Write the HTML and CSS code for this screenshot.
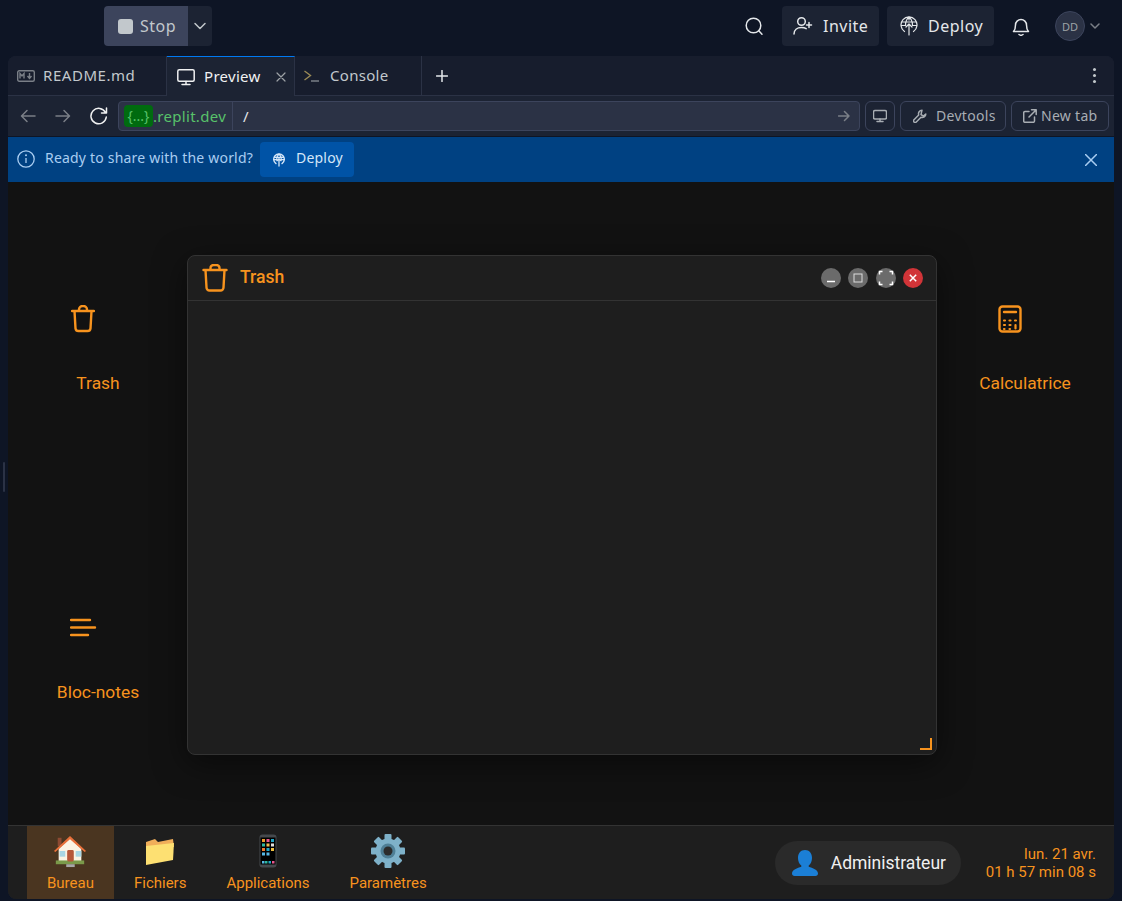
FILE: index.html
```html
<!DOCTYPE html>
<html lang="en">
<head>
<meta charset="utf-8">
<title>Preview</title>
<link rel="stylesheet" href="styles.css">
</head>
<body>
<header class="topbar">
  <div class="run">
    <button class="stop"><span class="stop-square"></span>Stop</button>
    <button class="stop-more"><svg width="14" height="14" viewBox="0 0 14 14" class="line"><path d="M2 4.500l5 5 5-5"/></svg></button>
  </div>
  <div class="top-right">
    <svg class="search line" width="20" height="20" viewBox="0 0 20 20"><circle cx="9.500" cy="9.500" r="7.300"/><path d="M14.800 14.800l3.200 3.400"/></svg>
    <button class="top-btn invite"><svg width="22" height="20" viewBox="0 0 22 20" class="line"><circle cx="8.500" cy="5.500" r="3.800"/><path d="M1 18c0-4 3-6.500 7.500-6.500 2 0 3.500.4 4.700 1.200M16 6.500v5M13.500 9h5"/></svg>Invite</button>
    <button class="top-btn deploy"><svg width="18" height="20" viewBox="0 0 18 20" class="line thin"><path d="M4.500 15.500A8 8 0 1 1 13.500 15.500M1.400 6h15.200M1 9.500h4.500M12.500 9.500H17M9 1C6.500 3 5.500 6 5.500 9.500M9 1c2.500 2 3.500 5 3.500 8.500M9 1v3M9 19V8M6 11l3-3 3 3"/></svg>Deploy</button>
    <svg class="bell line" width="18" height="20" viewBox="0 0 18 20"><path d="M1.500 15.500h15c-1.500-1.500-2-3-2-6.500a5.500 5.500 0 0 0-11 0c0 3.500-.5 5-2 6.500zM7 18.500c1 .8 3 .8 4 0"/></svg>
    <span class="avatar">DD</span>
    <svg class="avatar-more line" width="10" height="10" viewBox="0 0 10 10"><path d="M1 3l4 4 4-4"/></svg>
  </div>
</header>

<main class="panel">
  <nav class="tabs">
    <div class="tab readme">
      <svg width="18" height="12" viewBox="0 0 18 12" class="md"><rect x=".7" y=".7" width="16.600" height="10.600" rx="1.500"/><path d="M3 8.500v-5l2 2.500 2-2.500v5M12.500 3v5M10.500 6l2 2.500 2-2.500"/></svg>
      <span>README.md</span>
    </div>
    <div class="tab preview">
      <svg width="18" height="18" viewBox="0 0 18 18" class="line"><rect x=".8" y="1.800" width="16.400" height="11.400" rx="1.500"/><path d="M9 13.500V16M5 16.500h8"/></svg>
      <span>Preview</span>
      <svg class="tab-close line thin" width="10" height="10" viewBox="0 0 10 10"><path d="M1 1l8 8M9 1l-8 8"/></svg>
    </div>
    <div class="tab console">
      <svg width="15" height="12" viewBox="0 0 15 12" class="prompt"><path class="chev" d="M.5 1l6 4.500-6 4.500"/><path class="under" d="M7 11h8"/></svg>
      <span>Console</span>
    </div>
    <button class="tab-add"><svg width="12" height="12" viewBox="0 0 12 12" class="line"><path d="M6 .5v11M.5 6h11"/></svg></button>
    <span class="kebab"><i></i><i></i><i></i></span>
  </nav>

  <div class="urlbar">
    <svg class="nav-icon dim line" width="16" height="14" viewBox="0 0 16 14"><path d="M15 7H2M7 1.500L1.500 7 7 12.500"/></svg>
    <svg class="nav-icon dim line" width="16" height="14" viewBox="0 0 16 14"><path d="M1 7h13M9 1.500L14.500 7 9 12.500"/></svg>
    <svg class="nav-icon reload line" width="20" height="18" viewBox="0 0 20 18"><path d="M16.500 5.500A7.700 7.700 0 1 0 17.300 10M17.500 1v5h-5"/></svg>
    <div class="address">
      <span class="host"><b>{...}</b>.replit.dev</span>
      <span class="path">/</span>
      <svg class="go line" width="12" height="12" viewBox="0 0 12 12"><path d="M.5 6h10.500M6.500 1.500L11 6l-4.500 4.500"/></svg>
    </div>
    <button class="tool icon-only"><svg width="14" height="14" viewBox="0 0 14 14" class="line"><rect x=".5" y="1.500" width="13" height="8.500" rx="1.500"/><path d="M7 10v2.500M4 12.500h6"/></svg></button>
    <button class="tool devtools"><svg width="14" height="14" viewBox="0 0 14 14" class="line"><path d="M9 1.200a3.600 3.600 0 0 0-3.300 4.800L1 10.700a1.600 1.600 0 0 0 2.300 2.300L8 8.300A3.600 3.600 0 0 0 12.800 5L10.400 7 8 5.600l1-4.400z"/></svg><span>Devtools</span></button>
    <button class="tool newtab"><svg width="14" height="14" viewBox="0 0 14 14" class="line"><path d="M6 2.500H2a1.300 1.300 0 0 0-1.300 1.300V12A1.300 1.300 0 0 0 2 13.300h8.200a1.300 1.300 0 0 0 1.300-1.300V8M8.500.8h4.700v4.700M13 1L6 8"/></svg><span>New tab</span></button>
  </div>

  <div class="banner">
    <svg class="info" width="18" height="18" viewBox="0 0 18 18"><circle cx="9" cy="9" r="8.200"/><path d="M9 8v5"/><circle class="dot" cx="9" cy="5.300" r="1"/></svg>
    <span class="banner-text">Ready to share with the world?</span>
    <button class="banner-deploy"><svg width="12" height="14" viewBox="0 0 18 20" class="line thick"><path d="M4.500 15.500A8 8 0 1 1 13.500 15.500M1.400 6h15.200M1 9.500h4.500M12.500 9.500H17M9 1C6.500 3 5.500 6 5.500 9.500M9 1c2.500 2 3.500 5 3.500 8.500M9 19V8M6 11l3-3 3 3"/></svg><span>Deploy</span></button>
    <svg class="banner-close line" width="12" height="12" viewBox="0 0 12 12"><path d="M.5.5l11 11M11.500.5l-11 11"/></svg>
  </div>

  <section class="desktop">
    <div class="desk-icon trash">
      <svg width="24" height="28" viewBox="0 0 24 28" class="orange"><path d="M1 6h22M8 6V4.500A3.500 3.500 0 0 1 11.500 1h1A3.500 3.500 0 0 1 16 4.500V6M3.500 6l1 17.500A3 3 0 0 0 7.500 26h9a3 3 0 0 0 3-2.500l1-17.500"/></svg>
      <span>Trash</span>
    </div>
    <div class="desk-icon calc">
      <svg width="24" height="28" viewBox="0 0 24 28" class="orange"><rect x="1.500" y="1.500" width="21" height="25" rx="3"/><path d="M6 7h12"/><path class="keys" d="M6 15.500h1M11.500 15.500h1M17 15.500h1M6 20h1M11.500 20h1M6 24h.5M11.500 24h.5M17.500 20v3.500"/></svg>
      <span>Calculatrice</span>
    </div>
    <div class="desk-icon notes">
      <svg width="28" height="24" viewBox="0 0 28 24" class="orange"><path d="M1 3h19M1 10.500h24M1 18h17"/></svg>
      <span>Bloc-notes</span>
    </div>

    <article class="window">
      <header class="win-title">
        <svg width="26" height="28" viewBox="0 0 26 28" class="orange"><path d="M1.500 6h23M8.500 6V4A3 3 0 0 1 11.500 1h3A3 3 0 0 1 17.500 4V6M3.500 6l1 17.500A3 3 0 0 0 7.500 26.500h11a3 3 0 0 0 3-3L22.500 6"/></svg>
        <h1>Trash</h1>
        <div class="win-controls">
          <button class="ctl"><svg width="10" height="10" viewBox="0 0 10 10" class="ctl-line"><path d="M1 8.500h8"/></svg></button>
          <button class="ctl"><svg width="10" height="10" viewBox="0 0 10 10" class="ctl-thin"><rect x="1" y="1" width="8" height="8"/></svg></button>
          <button class="ctl"><svg width="16" height="16" viewBox="0 0 16 16" class="ctl-line"><path d="M1.500 4.500v-3h3M11.500 1.500h3v3M14.500 11.500v3h-3M4.500 14.500h-3v-3"/></svg></button>
          <button class="ctl red"><svg width="10" height="10" viewBox="0 0 10 10" class="ctl-line"><path d="M1.800 1.800l6.400 6.400M8.200 1.800l-6.400 6.400"/></svg></button>
        </div>
      </header>
      <div class="win-body"><span class="grip"></span></div>
    </article>
  </section>

  <footer class="taskbar">
    <div class="task active">
      <span class="task-ico"><svg width="34" height="34" viewBox="0 0 36 34">
        <rect x="5" y="3" width="4" height="9" fill="#8d4a32"/>
        <path d="M18 3L6 15v13h24V15z" fill="#fbf3e4"/>
        <path d="M1 17L18 1l17 16-1.500 1L18 4.500 2.500 18z" fill="#e8703a"/>
        <rect x="3" y="27" width="30" height="4" fill="#7a9a4a"/>
        <rect x="14" y="31" width="9" height="3" fill="#a7a7a7"/>
        <rect x="15" y="16" width="7" height="12" rx="1.500" fill="#b5573a"/>
        <rect x="7" y="17" width="6" height="6" fill="#a9d6e5"/>
        <rect x="24" y="17" width="6" height="6" fill="#a9d6e5"/>
      </svg></span>
      <span>Bureau</span>
    </div>
    <div class="task">
      <span class="task-ico"><svg width="30" height="28" viewBox="0 0 30 28">
        <path d="M1 5l9-3 3 3 15-3 1 8H1z" fill="#f0ae5a"/>
        <path d="M1 9l28-3-1 17L1 28z" fill="#fde072"/>
      </svg></span>
      <span>Fichiers</span>
    </div>
    <div class="task">
      <span class="task-ico"><svg width="18" height="34" viewBox="0 0 18 34">
        <rect x=".5" y=".5" width="17" height="33" rx="3" fill="#45494d"/>
        <rect x="1.500" y="3.500" width="15" height="27" fill="#000"/>
        <rect x="3" y="5" width="3" height="3" fill="#ef9a2c"/><rect x="7.500" y="5" width="3" height="3" fill="#e8578f"/><rect x="12" y="5" width="3" height="3" fill="#1fa8c9"/>
        <rect x="3" y="9.500" width="3" height="3" fill="#2eb7a0"/><rect x="7.500" y="9.500" width="3" height="3" fill="#f2b84b"/><rect x="12" y="9.500" width="3" height="3" fill="#e1e1e1"/>
        <rect x="3" y="14" width="3" height="3" fill="#ef7c2c"/><rect x="7.500" y="14" width="3" height="3" fill="#1fa8c9"/><rect x="12" y="14" width="3" height="3" fill="#f0c040"/>
        <rect x="3" y="18.500" width="3" height="3" fill="#56b8e6"/><rect x="7.500" y="18.500" width="3" height="3" fill="#56b8e6"/>
        <rect x="3" y="27" width="2.500" height="2.500" fill="#56b8e6"/><rect x="6" y="27" width="2.500" height="2.500" fill="#2eb7a0"/><rect x="9.500" y="27" width="2.500" height="2.500" fill="#1fa8c9"/><rect x="13" y="27" width="2.500" height="2.500" fill="#e8578f"/>
      </svg></span>
      <span>Applications</span>
    </div>
    <div class="task">
      <span class="task-ico"><svg width="34" height="34" viewBox="0 0 34 34">
        <g fill="#7eb1c9"><rect x="13.500" y="0" width="7" height="34" rx="1"/><rect x="13.500" y="0" width="7" height="34" rx="1" transform="rotate(45 17 17)"/><rect x="13.500" y="0" width="7" height="34" rx="1" transform="rotate(90 17 17)"/><rect x="13.500" y="0" width="7" height="34" rx="1" transform="rotate(135 17 17)"/><circle cx="17" cy="17" r="12.500"/></g>
        <circle cx="17" cy="17" r="7.500" fill="#4f7f96"/><circle cx="17" cy="17" r="4.500" fill="#2c2c2c"/>
      </svg></span>
      <span>Paramètres</span>
    </div>
    <div class="task-right">
      <div class="user">
        <svg width="28" height="28" viewBox="0 0 28 28"><path fill="#1b7fd6" d="M14 1c4.500 0 7 3.500 7 8 0 3.200-1.300 6-3.300 7.500v1.300c3.800 1.200 9.300 3.200 9.300 6.700 0 1.500-1 2.500-2.500 2.500h-21C2 27 1 26 1 24.500c0-3.500 5.500-5.500 9.300-6.700v-1.300C8.300 15 7 12.200 7 9c0-4.500 2.500-8 7-8z"/></svg>
        <span>Administrateur</span>
      </div>
      <div class="clock"><span>lun. 21 avr.</span><span>01 h 57 min 08 s</span></div>
    </div>
  </footer>
</main>
<span class="resize-handle"></span>
</body>
</html>
```

FILE: styles.css
```css
* { box-sizing: border-box; }
html, body { margin: 0; height: 100%; }
body {
  width: 1122px;
  height: 901px;
  overflow: hidden;
  background: #0e1525;
  font-family: "Noto Sans", "Open Sans", sans-serif;
  color: #f5f9fc;
  display: flex;
  flex-direction: column;
  position: relative;
}
button { font: inherit; color: inherit; border: 0; background: none; padding: 0; }
svg { display: block; flex: none; }
.line { fill: none; stroke: currentColor; stroke-width: 1.5; stroke-linecap: round; stroke-linejoin: round; }
.line.thick { stroke-width: 2; }
.line.thin { stroke-width: 1.2; }

.topbar { height: 56px; flex: none; display: flex; align-items: flex-start; padding: 6px 0 0 104px; }
.run { display: flex; height: 40px; }
.stop { width: 84px; background: #3c445c; border-radius: 4px 0 0 4px; display: flex; align-items: center; font-size: 16px; letter-spacing: .5px; color: #c2c8cc; padding-left: 14px; gap: 7px; }
.stop-square { width: 15px; height: 15px; background: #c2c8cc; border-radius: 3px; }
.stop-more { width: 24px; background: #1c2333; border-radius: 0 4px 4px 0; display: flex; align-items: center; justify-content: center; color: #c2c8cc; }
.top-right { margin-left: auto; display: flex; align-items: center; height: 40px; color: #e4e7ea; }
.search { margin-right: 18px; }
.top-btn { height: 40px; background: #1c2333; border-radius: 4px; display: flex; align-items: center; font-size: 16px; letter-spacing: .5px; }
.invite { width: 97px; padding-left: 11px; gap: 8px; margin-right: 8px; }
.deploy { width: 107px; padding-left: 13px; gap: 10px; margin-right: 18px; }
.bell { margin-right: 25px; }
.avatar { width: 30px; height: 30px; border-radius: 50%; background: #2b3245; border: 1px solid #3c445c; color: #9da2a6; font-size: 11px; display: flex; align-items: center; justify-content: center; margin-right: 5px; }
.avatar-more { color: #7a7f87; margin-right: 22px; }

.panel { width: 1106px; height: 843px; margin-left: 8px; flex: none; border-radius: 8px; overflow: hidden; display: flex; flex-direction: column; background: #1c2333; }
.tabs { height: 40px; flex: none; display: flex; align-items: stretch; border-bottom: 1px solid #2b3245; background: #171d2d; }
.tab { display: flex; align-items: center; font-size: 15px; letter-spacing: .3px; color: #c2c8cc; }
.tab span { margin-top: -2px; }
.readme { width: 159px; padding-left: 9px; gap: 8px; border-right: 1px solid #2b3245; letter-spacing: .55px; }
.md { fill: none; stroke: #7a7f87; stroke-width: 1.4; }
.preview { width: 128px; padding-left: 10px; gap: 9px; background: #1c2333; color: #f0f1f2; border-top: 1px solid #0079f2; border-right: 1px solid #2b3245; margin-bottom: -1px; position: relative; }
.tab-close { color: #9da2a6; margin-left: 6px; }
.console { width: 127px; padding-left: 9px; gap: 11px; border-right: 1px solid #2b3245; }
.prompt { fill: none; stroke-width: 1.4; }
.chev { stroke: #9a8a56; }
.under { stroke: #7a7f87; }
.tab-add { width: 40px; display: flex; align-items: center; justify-content: center; color: #e4e7ea; }
.kebab { margin-left: auto; width: 40px; display: flex; flex-direction: column; align-items: center; justify-content: center; gap: 3px; }
.kebab i { width: 3px; height: 3px; border-radius: 50%; background: #c2c8cc; }

.urlbar { height: 41px; flex: none; display: flex; align-items: center; background: #1c2333; padding: 0 5px 0 12px; border-bottom: 1px solid #0e1525; }
.nav-icon { margin-right: 19px; }
.dim { color: #7a7f87; }
.reload { color: #f0f1f2; margin-right: 9px; margin-left: -1px; }
.address { flex: none; width: 742px; height: 30px; background: #2b3245; border: 1px solid #3c445c; border-radius: 4px; display: flex; align-items: center; margin-right: 5px; font-size: 14px; }
.host { color: #58c26a; height: 100%; width: 114px; padding-left: 5px; display: flex; align-items: center; border-right: 1px solid #3c445c; font-size: 15px; letter-spacing: .3px; padding-bottom: 1px; }
.host b { font-weight: 400; background: #006b0f; border-radius: 4px; height: 22px; width: 29px; display: flex; align-items: center; justify-content: center; font-size: 14px; letter-spacing: 0; flex: none; }
.path { margin-left: 10px; color: #e4e7ea; margin-top: -1px; font-size: 15px; }
.go { margin-left: auto; margin-right: 9px; color: #7a7f87; }
.tool { height: 30px; border: 1px solid #3c445c; border-radius: 6px; color: #a8adb3; display: flex; align-items: center; font-size: 14px; letter-spacing: .3px; margin-right: 5px; flex: none; }
.tool span { margin-top: -2px; }
.icon-only { width: 30px; justify-content: center; }
.devtools { width: 106px; padding-left: 12px; gap: 9px; }
.newtab { width: 98px; padding-left: 11px; gap: 4px; margin-right: 0; }

.banner { height: 45px; flex: none; background: #004182; display: flex; align-items: center; padding-left: 9px; color: #a9cdf1; font-size: 14px; letter-spacing: .2px; }
.banner-text { margin-top: -4px; }
.info { fill: none; stroke: #a9cdf1; stroke-width: 1.3; margin-right: 10px; margin-top: -1px; }
.info .dot { fill: #a9cdf1; stroke: none; }
.banner-deploy { width: 94px; height: 35px; background: #0053a6; border-radius: 4px; margin-left: 7px; display: flex; align-items: center; padding-left: 13px; gap: 11px; color: #d4e6f8; font-size: 14px; letter-spacing: .2px; }
.banner-deploy span { margin-top: -4px; }
.banner-close { margin-left: auto; margin-right: 17px; color: #a9cdf1; }

.desktop { flex: 1; position: relative; background: #121212; font-family: Roboto, sans-serif; color: #f7931e; }
.orange { fill: none; stroke: #f7931e; stroke-width: 2.4; stroke-linecap: round; stroke-linejoin: round; }
.orange .keys { stroke-width: 2.200; }
.desk-icon { position: absolute; width: 120px; font-size: 17.400px; line-height: 20px; }
.desk-icon svg { position: absolute; }
.desk-icon span { position: absolute; left: 0; width: 100%; text-align: center; top: 68px; }
.trash { left: 30px; top: 123px; height: 90px; }
.trash svg { left: 33px; top: 0; }
.calc { left: 957px; top: 123px; height: 90px; }
.calc svg { left: 33px; top: 0; }
.notes { left: 30px; top: 432px; height: 90px; }
.notes svg { left: 32px; top: 3px; }

.window { position: absolute; left: 179px; top: 73px; width: 750px; height: 500px; background: #1e1e1e; border: 1px solid #333; border-radius: 8px; box-shadow: 0 8px 32px rgba(0,0,0,.5); display: flex; flex-direction: column; }
.win-title { height: 45px; flex: none; border-bottom: 1px solid #333; display: flex; align-items: center; padding: 0 13px 0 14px; gap: 12px; }
.win-title h1 { margin: -2px 0 0; font-size: 17.600px; font-weight: 500; }
.win-controls { margin-left: auto; display: flex; gap: 7.330px; }
.ctl { width: 20px; height: 20px; border-radius: 50%; background: #6b6b6b; display: flex; align-items: center; justify-content: center; }
.ctl.red { background: #d13438; }
.ctl-line { fill: none; stroke: #fff; stroke-width: 1.500; }
.ctl-thin { fill: none; stroke: #ddd; stroke-width: 1; }
.win-body { flex: 1; position: relative; }
.grip { position: absolute; right: 4px; bottom: 4px; width: 12px; height: 12px; border-right: 2px solid #f7931e; border-bottom: 2px solid #f7931e; }

.taskbar { height: 74px; flex: none; background: #1e1e1e; border-top: 1px solid #333; display: flex; padding-left: 19px; font-family: Roboto, sans-serif; color: #f7931e; font-size: 15px; }
.task { padding: 8px 20px 7px; display: flex; flex-direction: column; align-items: center; justify-content: space-between; }
.task.active { background: #4a3520; }
.task-ico { height: 34px; display: flex; align-items: center; justify-content: center; }
.task-right { margin-left: auto; display: flex; align-items: center; padding: 1px 18px 0 0; }
.user { width: 186px; height: 44px; background: #2a2a2a; border-radius: 22px; display: flex; align-items: center; padding-left: 16px; gap: 12px; color: #f0f0f0; font-size: 17.500px; margin-right: 25px; }
.clock { display: flex; flex-direction: column; align-items: flex-end; line-height: 18px; font-size: 15px; }

.resize-handle { position: absolute; left: 3px; top: 462px; width: 2px; height: 30px; background: #2b3245; border-radius: 1px; }
```
